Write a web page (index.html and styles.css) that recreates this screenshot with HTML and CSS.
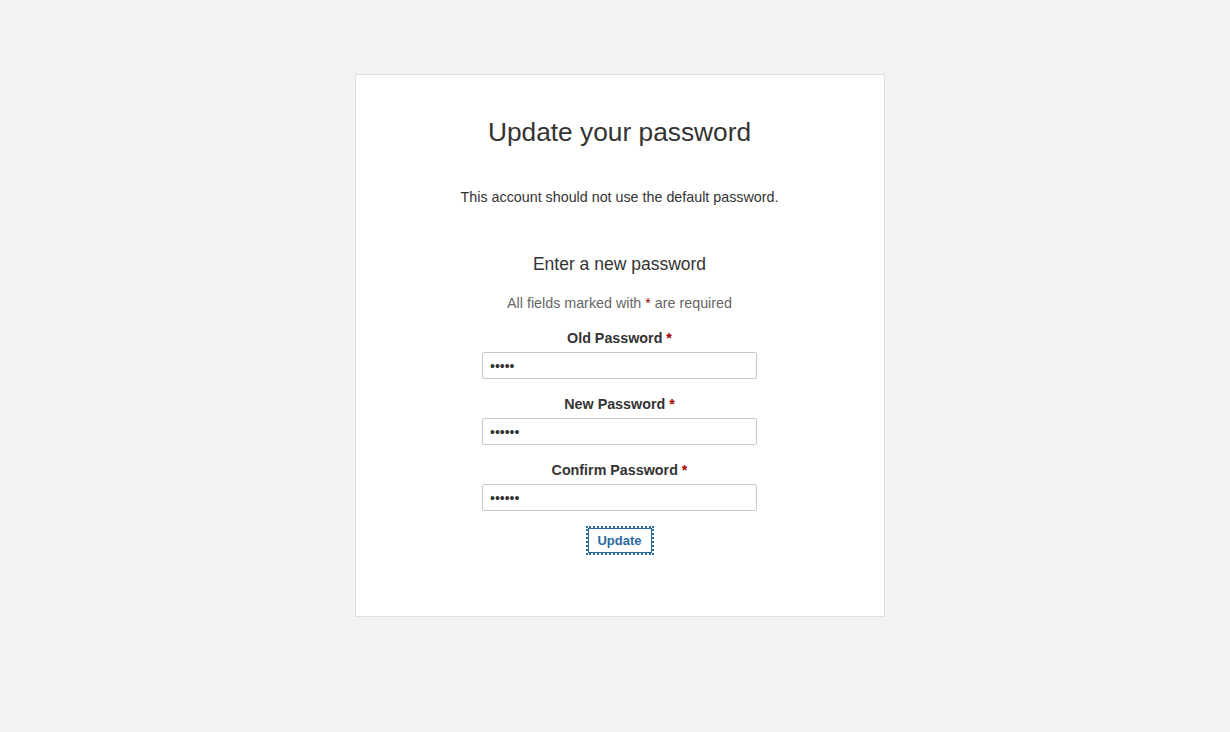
FILE: index.html
```html
<!DOCTYPE html>
<html>
<head>
<meta charset="utf-8">
<link rel="stylesheet" href="styles.css">
</head>
<body>
<div class="page">
  <div class="card">
    <h1 class="title">Update your password</h1>
    <p class="notice">This account should not use the default password.</p>
    <h2 class="subtitle">Enter a new password</h2>
    <p class="required-note">All fields marked with <span class="req">*</span> are required</p>
    <form class="form">
      <label class="label" for="old">Old Password <span class="req">*</span></label>
      <input class="field" id="old" type="password" value="abcde">
      <label class="label gap" for="new">New Password <span class="req">*</span></label>
      <input class="field" id="new" type="password" value="abcdef">
      <label class="label gap" for="confirm">Confirm Password <span class="req">*</span></label>
      <input class="field" id="confirm" type="password" value="abcdef">
      <button class="btn" type="button">Update</button>
    </form>
  </div>
</div>
</body>
</html>
```
FILE: styles.css
```css
html, body {
  margin: 0;
  padding: 0;
  background: #f2f2f2;
}
body {
  font-family: "Liberation Sans", Arial, sans-serif;
  color: #333;
  height: 732px;
}
.page {
  display: flex;
  justify-content: center;
  padding: 74px 0 0 10px;
}
.card {
  box-sizing: border-box;
  width: 530px;
  background: #fff;
  border: 1px solid #e0e0e0;
  display: flex;
  flex-direction: column;
  align-items: center;
  padding: 0 1px 63px 0;
}
.title {
  margin: 42px 0 0;
  font-size: 26.3px;
  line-height: 30px;
  font-weight: normal;
  color: #333;
}
.notice {
  margin: 40px 0 0;
  font-size: 14.3px;
  line-height: 20px;
  color: #333;
}
.subtitle {
  margin: 46px 0 0;
  font-size: 17.5px;
  line-height: 22px;
  font-weight: normal;
  color: #333;
}
.required-note {
  margin: 18px 0 0;
  font-size: 14.3px;
  line-height: 20px;
  color: #666;
}
.req {
  color: #a30000;
}
.form {
  display: flex;
  flex-direction: column;
  align-items: center;
  margin-top: 15px;
}
.label {
  font-size: 14.3px;
  line-height: 20px;
  font-weight: bold;
  color: #333;
}
.label.gap {
  margin-top: 15px;
}
.field {
  box-sizing: border-box;
  width: 275px;
  height: 27px;
  margin-top: 4px;
  padding: 0 7px;
  border: 1px solid #c8c8c8;
  border-radius: 2px;
  font-size: 14px;
  color: #333;
  background: #fff;
}
.btn {
  box-sizing: border-box;
  margin-top: 17px;
  width: 64px;
  height: 25px;
  padding: 0;
  background: #fff;
  border: 1px solid #2a6a9e;
  outline: 2px dotted #2a6a9e;
  outline-offset: 0;
  border-radius: 0;
  font-family: "Liberation Sans", Arial, sans-serif;
  font-size: 13px;
  font-weight: bold;
  color: #2a6a9e;
}
```
